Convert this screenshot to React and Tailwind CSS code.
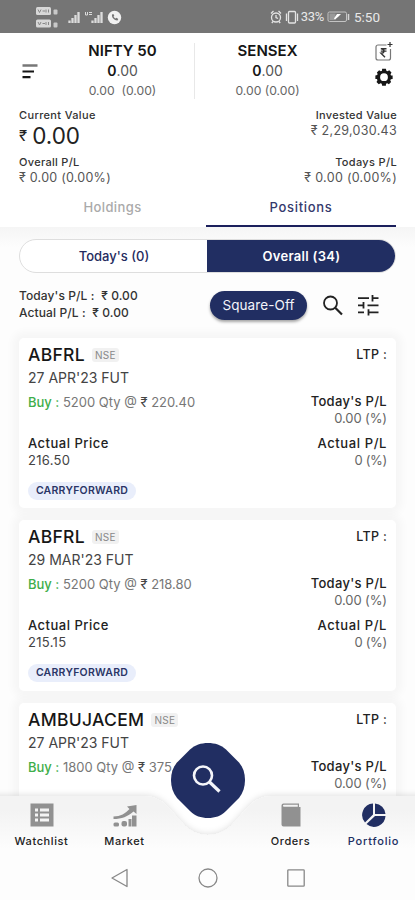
// Portfolio screen: open positions with index header and bottom navigation

const POSITIONS = [
  { symbol: 'ABFRL', expiry: "27 APR'23 FUT", qty: 5200, rate: '220.40', actual: '216.50' },
  { symbol: 'ABFRL', expiry: "29 MAR'23 FUT", qty: 5200, rate: '218.80', actual: '215.15' },
  { symbol: 'AMBUJACEM', expiry: "27 APR'23 FUT", qty: 1800, rate: '375.20', actual: '371.05' },
];

const StatusBar = () => (
  <div className="h-[33px] shrink-0 bg-[#757575] flex items-center justify-between pl-[35px] pr-[35px] text-[#e8e8e8]">
    <svg width="88" height="24" viewBox="0 0 88 24" fill="none">
      <rect x="1" y="2" width="15" height="8" rx="1.5" fill="#d8d8d8" />
      <rect x="1" y="14.5" width="15" height="8" rx="1.5" fill="#d8d8d8" />
      <path d="M3 4.5l1.5 3L6 4.5M7.5 6h2.5M11 4.5v3M13.5 4.5v3M3 17l1.5 3L6 17M7.5 18.5h2.5M11 17v3M13.5 17v3" stroke="#888" />
      <rect x="18.5" y="4.5" width="4" height="5" rx="1" fill="#c9c9c9" />
      <rect x="18.5" y="17.5" width="4" height="5" rx="1" fill="#c9c9c9" />
      <path d="M34.500 18v-2.500M37.500 18v-5M40.500 18v-8M43.500 18v-11M57.500 18v-2.500M60.500 18v-5M63.500 18v-8M66.500 18v-11" stroke="#dcdcdc" strokeWidth="2.300" />
      <path d="M50.5 7v3h2V7M54 7.500h3M54 9.500h3" stroke="#dcdcdc" />
      <circle cx="79.500" cy="12.500" r="6.700" fill="#f0f0f0" />
      <path d="M77 9.500c-.6 3 2.500 6.200 5.500 6l.8-1.500-1.800-1.200-1 .7c-.9-.4-1.500-1-1.900-1.900l.7-1-1-1.700z" fill="#757575" />
    </svg>
    <div className="flex items-center">
      <svg width="30" height="16" viewBox="0 0 30 16" fill="none" stroke="#e4e4e4" strokeWidth="1.3">
        <circle cx="7" cy="8.500" r="4.500" />
        <path d="M7 6v2.500l2 1M2 4.500l2.500-2.500M12 4.500L9.500 2M4 12.500l-1.200 1.500M10 12.500l1.200 1.500" />
        <rect x="19.500" y="2.500" width="7" height="11.500" rx="1" />
        <path d="M17.500 4.500v7.500M28.500 4.500v7.500" />
      </svg>
      <span className="text-[13px] leading-4 tracking-[-0.3px] ml-[2px] font-[Roboto,sans-serif]">33%</span>
      <svg className="ml-[3px]" width="23" height="12" viewBox="0 0 23 12" fill="none">
        <rect x="1" y="1" width="18.5" height="9.5" rx="1.5" stroke="#c4c4c4" />
        <rect x="2.5" y="2.5" width="6" height="6.5" fill="#999" />
        <path d="M7 7.500l3-4.500h4l-2.500 2.500-3.500 3z" fill="#fff" />
        <path d="M21.5 3v6" stroke="#d4d4d4" strokeWidth="1.5" />
      </svg>
      <span className="text-[13.5px] leading-4 ml-[4px] font-[Roboto,sans-serif]">5:50</span>
    </div>
  </div>
);

const IndexQuote = ({ name, change }) => (
  <div className="flex flex-col items-center">
    <span className="text-[15px] leading-5 font-semibold text-[#161616] whitespace-nowrap">{name}</span>
    <span className="text-[14px] leading-5 text-[#555]">
      <b className="font-semibold text-[#161616]">0</b>.00
    </span>
    <span className="text-[12.2px] leading-[19px] text-[#666] whitespace-pre">{change}</span>
  </div>
);

const MarketHeader = () => (
  <div className="h-[73px] shrink-0 flex pt-2">
    <svg className="ml-[21px] mt-[22px]" width="18" height="16" viewBox="0 0 18 16">
      <path d="M1.5 2.500h15" stroke="#777" strokeWidth="2.5" />
      <path d="M1.5 8.500h11.500M1.5 14.200h8" stroke="#161616" strokeWidth="2.2" />
    </svg>
    <div className="ml-[34px] w-[99px]">
      <IndexQuote name="NIFTY 50" change="0.00  (0.00)" />
    </div>
    <div className="ml-[22px] mt-[2px] w-px h-[56px] bg-[#e8e8e8]" />
    <div className="ml-[23px] w-[99px]">
      <IndexQuote name="SENSEX" change="0.00 (0.00)" />
    </div>
    <div className="ml-[57px] flex flex-col gap-[5px]">
      <svg width="20" height="22" viewBox="0 0 20 22" fill="none" stroke="#333" strokeWidth="1.2">
        <path d="M12.500 4H4a2 2 0 0 0-2 2V17a2 2 0 0 0 2 2h10.500a2 2 0 0 0 2-2V8" stroke="#777" />
        <path d="M16 1v5M13.500 3.500h5" />
        <path d="M6.800 7.800h5.700M6.800 10.100h5.700M7 7.800c4 0 4 4.500 0 4.500l4 4" strokeWidth="1.4" />
      </svg>
      <svg className="ml-px" width="18" height="18" viewBox="0 0 24 24" fill="#161616">
        <path fillRule="evenodd" d="M9.500 1h5l.7 2.500 1.500.7L19 3l3 3-1.300 2.400.6 1.500L23.500 10v4.500l-2.400.6-.7 1.500L21.500 18.500 18.500 21.500l-2.200-1.100-1.600.6L14.500 23.500h-5l-.5-2.500-1.600-.6L5 21.500l-3-3 1.300-2.200-.7-1.500L.5 14.500V10l2.400-.6.6-1.500L2.500 6 5.500 3l2.300 1.200 1.500-.7zM12 7a5.200 5.200 0 1 0 0 10.400A5.200 5.200 0 0 0 12 7z" />
      </svg>
    </div>
  </div>
);

const Summary = () => (
  <div className="h-[82px] shrink-0 pl-[19px] pr-[18px] pt-[2px] flex justify-between text-[#555]">
    <div>
      <p className="text-[11px] leading-[15px] font-medium text-[#333] tracking-[0.35px]">Current Value</p>
      <p className="text-[22.5px] leading-[26px] text-[#222] flex items-center gap-[5px]">
        <span className="text-[15px]">₹</span>0.00
      </p>
      <p className="mt-[6px] text-[11px] leading-[14px] font-medium text-[#333] tracking-[0.3px]">Overall P/L</p>
      <p className="text-[12.5px] leading-[17px] tracking-[0.25px]">₹ 0.00 (0.00%)</p>
    </div>
    <div className="text-right">
      <p className="text-[11px] leading-[15px] font-medium text-[#333] tracking-[0.3px]">Invested Value</p>
      <p className="text-[12.5px] leading-4 tracking-[0.3px]">₹ 2,29,030.43</p>
      <p className="mt-[16px] text-[11px] leading-[14px] font-medium text-[#333] tracking-[0.35px]">Todays P/L</p>
      <p className="text-[12.5px] leading-[17px] tracking-[0.3px]">₹ 0.00 (0.00%)</p>
    </div>
  </div>
);

const Tabs = () => (
  <div className="h-[39px] shrink-0 px-[19px] flex text-[13px] leading-[39px] font-medium text-center tracking-[0.4px]">
    <div className="w-[187px] text-[#aaa]">Holdings</div>
    <div className="flex-1 text-[#34396c] border-b-2 border-[#1b1f5c] tracking-[0.7px]">Positions</div>
  </div>
);

const Toolbar = () => (
  <div className="h-[47px] mt-[12px] px-[19px] flex">
    <div className="w-[191px] pt-[2px] text-[12px] leading-[17px] font-medium text-[#333] tracking-[0.1px]">
      <p>Today's P/L :&nbsp; ₹ 0.00</p>
      <p>Actual P/L :&nbsp; ₹ 0.00</p>
    </div>
    <button className="mt-[6px] w-[97px] h-[29px] rounded-full bg-[#212e62] text-[#f4f4fa] text-[13.5px] leading-[27px] tracking-[0.1px] shadow-[0_2px_3px_rgba(0,0,0,0.35)]">
      Square-Off
    </button>
    <svg className="ml-[15px] mt-[10px]" width="23" height="23" viewBox="0 0 23 23" fill="none" stroke="#222" strokeWidth="1.8">
      <circle cx="8.500" cy="8" r="6.500" />
      <path d="M13 12.500l7 7" strokeWidth="2.2" />
    </svg>
    <svg className="ml-[12px] mt-[9px]" width="23" height="23" viewBox="0 0 23 23" stroke="#222" strokeWidth="1.8">
      <path d="M1 4.200h11M16 4.200h5.500M15.500 1v6.400M1 11.300h5M10.500 11.300h11M6.500 8v6.500M1 18.400h6M12 18.400h9.500M11.500 15.200v6.400" />
    </svg>
  </div>
);

const PositionCard = ({ position }) => (
  <div className="h-[170.3px] shrink-0 bg-white rounded-[5px] px-[9px] pt-[7px] text-[#333] shadow-[0_0_9px_6px_rgba(0,0,0,0.03)]">
    <div className="flex justify-between leading-5">
      <div className="flex items-center gap-[7px]">
        <span className="text-[17.5px] font-medium text-[#161616] tracking-[0.3px]">{position.symbol}</span>
        <span className="h-[14px] px-[3px] rounded-[3px] bg-[#f1f1f1] text-[10px] leading-[14px] text-[#888] tracking-[0.3px]">NSE</span>
      </div>
      <span className="text-[12.5px] font-medium text-[#222] tracking-[0.3px]">LTP :</span>
    </div>
    <p className="mt-[3px] text-[14px] leading-5 text-[#444]">{position.expiry}</p>
    <div className="mt-[4px] flex justify-between">
      <p className="text-[13px] leading-5 text-[#777]">
        <span className="font-medium text-[#3fae4a]">Buy :</span> {position.qty} Qty @ <span className="text-[#444]">₹</span> {position.rate}
      </p>
      <div className="text-right leading-[17px]">
        <p className="mt-[1px] text-[13px] font-medium text-[#222] tracking-[0.3px]">Today's P/L</p>
        <p className="text-[13px] text-[#666] tracking-[-0.1px]">0.00 (%)</p>
      </div>
    </div>
    <div className="mt-[8px] flex justify-between text-[13px] leading-[17px] text-[#444]">
      <div>
        <p className="font-medium text-[#222] tracking-[0.5px]">Actual Price</p>
        <p className="tracking-[0.3px]">{position.actual}</p>
      </div>
      <div className="text-right">
        <p className="font-medium text-[#222] tracking-[0.6px]">Actual P/L</p>
        <p className="text-[#666] tracking-[-0.3px]">0 (%)</p>
      </div>
    </div>
    <div className="mt-[13px] h-[18px] w-[108px] rounded-full bg-[#e9eefb] text-center text-[10.5px] leading-[18px] font-semibold text-[#2a3566] tracking-[0.25px]">
      CARRYFORWARD
    </div>
  </div>
);

const NavItem = ({ label, active, children }) => (
  <div className="w-[83px] flex flex-col items-center pt-[26px]">
    <svg width="24" height="24" viewBox="0 0 24 24" fill={active ? '#212e62' : '#919191'}>{children}</svg>
    <span className={`mt-[6px] text-[11px] leading-4 font-medium ${active ? 'text-[#212e62] tracking-[0.8px]' : 'text-[#222] tracking-[0.6px]'}`}>{label}</span>
  </div>
);

const BottomNav = () => (
  <div className="absolute left-0 top-[777px] w-[415px] h-[80px]">
    <svg className="absolute inset-0" width="415" height="80" viewBox="0 0 415 80">
      <defs>
        <linearGradient id="navFill" x1="0" y1="0" x2="0" y2="1">
          <stop offset="0.2" stopColor="#f3f3f3" />
          <stop offset="0.75" stopColor="#fdfdfd" />
        </linearGradient>
        <filter id="navShadow" x="-5%" y="-30%" width="110%" height="160%">
          <feDropShadow dx="0" dy="-1" stdDeviation="3" floodColor="#000" floodOpacity="0.12" />
        </filter>
      </defs>
      <path
        d="M-10 19H143C153 19 160 22 167 29L185 49C192 55 200 58 208 58C216 58 224 55 231 49L249 29C256 22 263 19 273 19H425V90H-10z"
        fill="url(#navFill)"
        filter="url(#navShadow)"
      />
    </svg>
    <div className="relative flex justify-between">
      <div className="flex">
        <NavItem label="Watchlist">
          <path fillRule="evenodd" d="M.5.500h23v23H.5zM5 5.500h3v3H5zm5 0h9v3h-9zM5 10.500h3v3H5zm5 0h9v3h-9zM5 15.500h3v3H5zm5 0h9v3h-9z" />
        </NavItem>
        <NavItem label="Market">
          <path d="M.5 13.500c7 0 12-3 16-7.500L14 3.500l9.500-1.500v9l-3-2.500C15 13.500 8.500 16 .5 16z" />
          <rect x="0.5" y="19.500" width="5.5" height="4" rx="1.500" />
          <rect x="8.500" y="18" width="5.500" height="5.500" rx="2" />
          <path d="M15.500 16h3v7.500h-3zM19 12.500h4.500v11H19z" />
        </NavItem>
      </div>
      <div className="flex">
        <NavItem label="Orders">
          <path fillRule="evenodd" d="M4.500 .5H20v3.500h1.500V23.500H4.500a2 2 0 0 1-2-2V2.500a2 2 0 0 1 2-2zM5 1.700a1 1 0 0 0 0 2.100H18.800V1.700z" />
        </NavItem>
        <NavItem label="Portfolio" active>
          <path d="M11 .5V11.500L3 19.500A11.500 11.500 0 0 1 11 .5zM13 .5A11.500 11.500 0 0 1 23.500 11H13zM13 13h10.500A11.500 11.500 0 0 1 4.500 21z" />
        </NavItem>
      </div>
    </div>
  </div>
);

const SearchFab = () => (
  <svg className="absolute left-[169px] top-[741px]" width="78" height="79" viewBox="0 0 78 79">
    <path
      d="M39 2C46 2 52 4 57 8.500L70 21.500C74 26 76 32 76 39C76 46 74 52 70 57L57 70C52 75 46 77 39 77C32 77 26 75 21 70L8 57C4 52 2 46 2 39C2 32 4 26 8 21.500L21 8.500C26 4 32 2 39 2Z"
      fill="#212e62"
    />
    <g fill="none" stroke="#f5f6fa" strokeWidth="2.6">
      <circle cx="34" cy="34.500" r="9" />
      <path d="M40.500 41l10 9.500" strokeWidth="3.2" />
    </g>
  </svg>
);

const SystemNav = () => (
  <div className="absolute left-0 top-[857px] w-[415px] h-[43px] bg-[#fdfdfd] flex items-center justify-center gap-[68px] pb-[2px]">
    <svg width="20" height="20" viewBox="0 0 20 20" fill="none" stroke="#888" strokeWidth="1.3">
      <path d="M17 1.500v17L2 10z" strokeLinejoin="round" />
    </svg>
    <svg width="20" height="20" viewBox="0 0 20 20" fill="none" stroke="#888" strokeWidth="1.3">
      <circle cx="10" cy="10" r="9" />
    </svg>
    <svg width="20" height="20" viewBox="0 0 20 20" fill="none" stroke="#888" strokeWidth="1.3">
      <rect x="1.8" y="1.8" width="16.4" height="16.4" rx="0.8" />
    </svg>
  </div>
);

const App = () => (
  <div className="relative w-[415px] h-[900px] overflow-hidden bg-white flex flex-col font-[Inter,Roboto,sans-serif]">
    <StatusBar />
    <MarketHeader />
    <Summary />
    <Tabs />

    {/* Scrolling area */}
    <div className="flex-1 overflow-hidden bg-linear-to-b from-[#f5f5f5] from-0% via-[#fdfdfd] via-3% to-[#fdfdfd]">
      <div className="mt-[12px] mx-[19px] h-[34px] flex rounded-full border border-[#dedede] bg-white overflow-hidden text-[13px] leading-[32px] font-medium text-center">
        <div className="w-[188px] text-[#252b60]">Today's (0)</div>
        <div className="flex-1 bg-[#212e62] text-white font-semibold -m-px leading-[34px] tracking-[0.3px]">Overall (34)</div>
      </div>
      <Toolbar />
      <div className="mt-[6px] px-[19px] flex flex-col gap-[12px]">
        {POSITIONS.map((position, i) => (
          <PositionCard key={i} position={position} />
        ))}
      </div>
    </div>

    <BottomNav />
    <SearchFab />
    <SystemNav />
  </div>
);

export default App;
